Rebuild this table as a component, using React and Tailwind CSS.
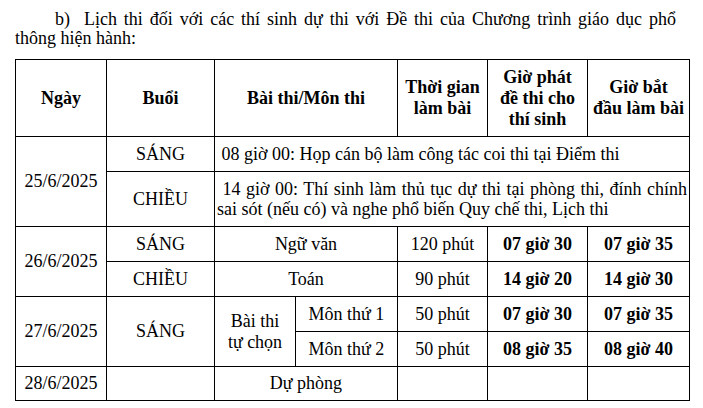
const cell = 'border border-black text-center align-middle p-0'

const exams = [
  { date: '26/6/2025', session: 'SÁNG', subject: 'Ngữ văn', time: '120 phút', give: '07 giờ 30', start: '07 giờ 35' },
  { session: 'CHIỀU', subject: 'Toán', time: '90 phút', give: '14 giờ 20', start: '14 giờ 30' },
]

export default function App() {
  return (
    <div className="w-[703px] h-[408px] overflow-hidden bg-white text-black font-['Liberation_Serif',serif] text-[18px]">
      <div className="ml-[15px] w-[661px] pt-[10px] leading-[19px]">
        <div className="pl-[40px] text-justify [text-align-last:justify]">
          b)&nbsp; Lịch thi đối với các thí sinh dự thi với Đề thi của Chương trình giáo dục phổ
        </div>
        <div>thông hiện hành:</div>
      </div>
      <table className="mt-[11px] ml-[15px] w-[674px] table-fixed border-collapse leading-[21px]">
        <colgroup>
          <col className="w-[91px]" />
          <col className="w-[108px]" />
          <col className="w-[81px]" />
          <col className="w-[102px]" />
          <col className="w-[90px]" />
          <col className="w-[100px]" />
          <col className="w-[102px]" />
        </colgroup>
        <thead>
          <tr className="h-[77px] font-bold">
            <th className={cell}>Ngày</th>
            <th className={cell}>Buổi</th>
            <th className={cell} colSpan={2}>Bài thi/Môn thi</th>
            <th className={cell}>Thời gian<br />làm bài</th>
            <th className={cell}>Giờ phát<br />đề thi cho<br />thí sinh</th>
            <th className={cell}>Giờ bắt<br />đầu làm bài</th>
          </tr>
        </thead>
        <tbody>
          <tr className="h-[35px]">
            <td className={cell} rowSpan={2}>25/6/2025</td>
            <td className={cell}>SÁNG</td>
            <td className="border border-black text-left px-[2px] leading-[20px]" colSpan={5}>&nbsp;08 giờ 00: Họp cán bộ làm công tác coi thi tại Điểm thi</td>
          </tr>
          <tr className="h-[55px]">
            <td className={cell}>CHIỀU</td>
            <td className="border border-black px-[2px] leading-[20px]" colSpan={5}>
              <div className="text-justify">
                &nbsp;14 giờ 00: Thí sinh làm thủ tục dự thi tại phòng thi, đính chính sai sót (nếu có) và nghe phổ biến Quy chế thi, Lịch thi
              </div>
            </td>
          </tr>
          {exams.map((r, i) => (
            <tr key={i} className="h-[35px]">
              {r.date && <td className={cell} rowSpan={2}>{r.date}</td>}
              <td className={cell}>{r.session}</td>
              <td className={cell} colSpan={2}>{r.subject}</td>
              <td className={cell}>{r.time}</td>
              <td className={`${cell} font-bold`}>{r.give}</td>
              <td className={`${cell} font-bold`}>{r.start}</td>
            </tr>
          ))}
          <tr className="h-[35px]">
            <td className={cell} rowSpan={2}>27/6/2025</td>
            <td className={cell} rowSpan={2}>SÁNG</td>
            <td className={cell} rowSpan={2}>Bài thi<br />tự chọn</td>
            <td className={cell}>Môn thứ 1</td>
            <td className={cell}>50 phút</td>
            <td className={`${cell} font-bold`}>07 giờ 30</td>
            <td className={`${cell} font-bold`}>07 giờ 35</td>
          </tr>
          <tr className="h-[35px]">
            <td className={cell}>Môn thứ 2</td>
            <td className={cell}>50 phút</td>
            <td className={`${cell} font-bold`}>08 giờ 35</td>
            <td className={`${cell} font-bold`}>08 giờ 40</td>
          </tr>
          <tr className="h-[34px]">
            <td className={cell}>28/6/2025</td>
            <td className={cell}></td>
            <td className={cell} colSpan={2}>Dự phòng</td>
            <td className={cell}></td>
            <td className={cell}></td>
            <td className={cell}></td>
          </tr>
        </tbody>
      </table>
    </div>
  )
}
